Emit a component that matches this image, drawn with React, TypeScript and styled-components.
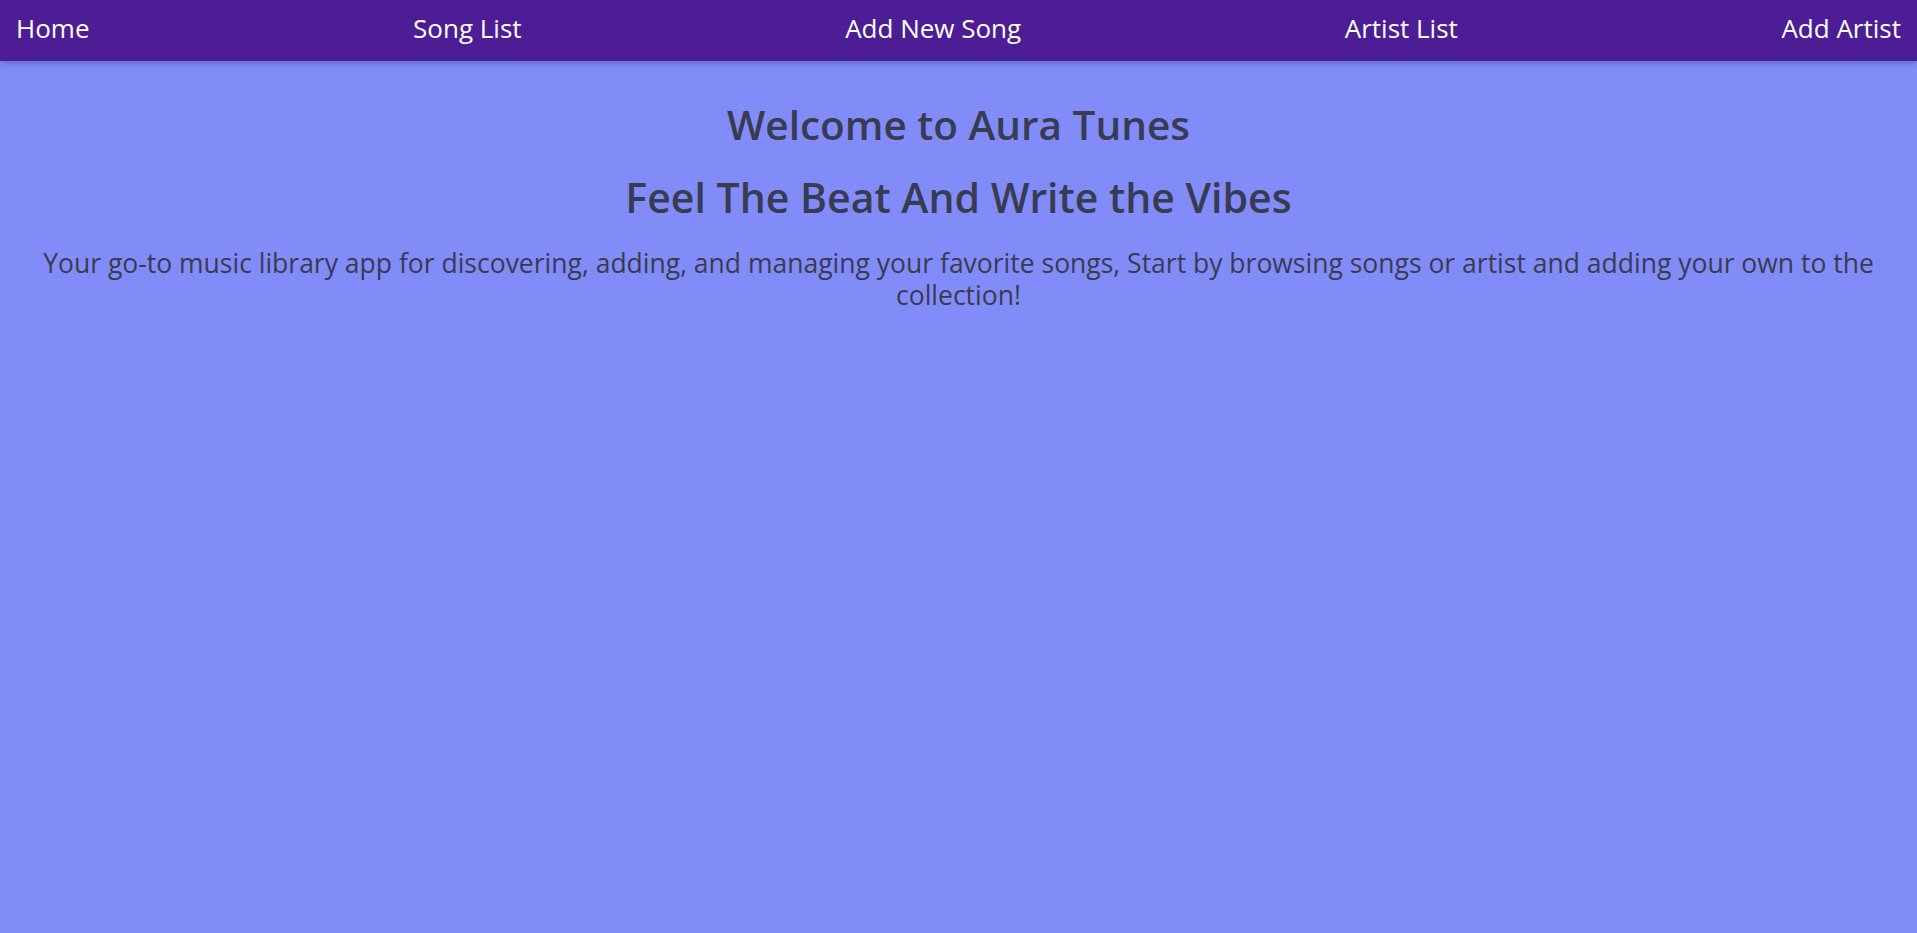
import styled, { createGlobalStyle } from "styled-components";

const navItems = ["Home", "Song List", "Add New Song", "Artist List", "Add Artist"];

export default function App() {
  return (
    <>
      <GlobalStyle />
      <Page>
        <NavBar>
          {navItems.map((item) => (
            <NavLink key={item} href="#">
              {item}
            </NavLink>
          ))}
        </NavBar>
        <Hero>
          <Title>Welcome to Aura Tunes</Title>
          <Subtitle>Feel The Beat And Write the Vibes</Subtitle>
          <Intro>
            Your go-to music library app for discovering, adding, and managing
            your favorite songs, Start by browsing songs or artist and adding
            your own to the collection!
          </Intro>
        </Hero>
      </Page>
    </>
  );
}

const GlobalStyle = createGlobalStyle`
  html, body {
    margin: 0;
    padding: 0;
    background-color: #818cf8;
  }
  body {
    font-family: "Open Sans", "Noto Sans", sans-serif;
  }
  * {
    box-sizing: border-box;
  }
`;

const Page = styled.div`
  min-height: 100vh;
  background-color: #818cf8;
`;

const NavBar = styled.nav`
  height: 61px;
  padding: 0 16px 5px;
  display: flex;
  align-items: center;
  justify-content: space-between;
  background-color: #4c1d95;
  box-shadow: 0 2px 6px rgba(0, 0, 0, 0.25);
`;

const NavLink = styled.a`
  color: #ffffff;
  font-size: 26px;
  text-decoration: none;
  line-height: 32px;
`;

const Hero = styled.main`
  padding: 44px 16px 0;
  display: flex;
  flex-direction: column;
  align-items: center;
  text-align: center;
  color: #383b52;
`;

const Title = styled.h1`
  margin: 0;
  font-size: 40.5px;
  line-height: 40px;
  font-weight: 600;
`;

const Subtitle = styled.h2`
  margin: 32px 0 0;
  font-size: 41px;
  line-height: 40px;
  font-weight: 600;
`;

const Intro = styled.p`
  margin: 30px 0 0;
  font-size: 26.5px;
  line-height: 32px;
`;
